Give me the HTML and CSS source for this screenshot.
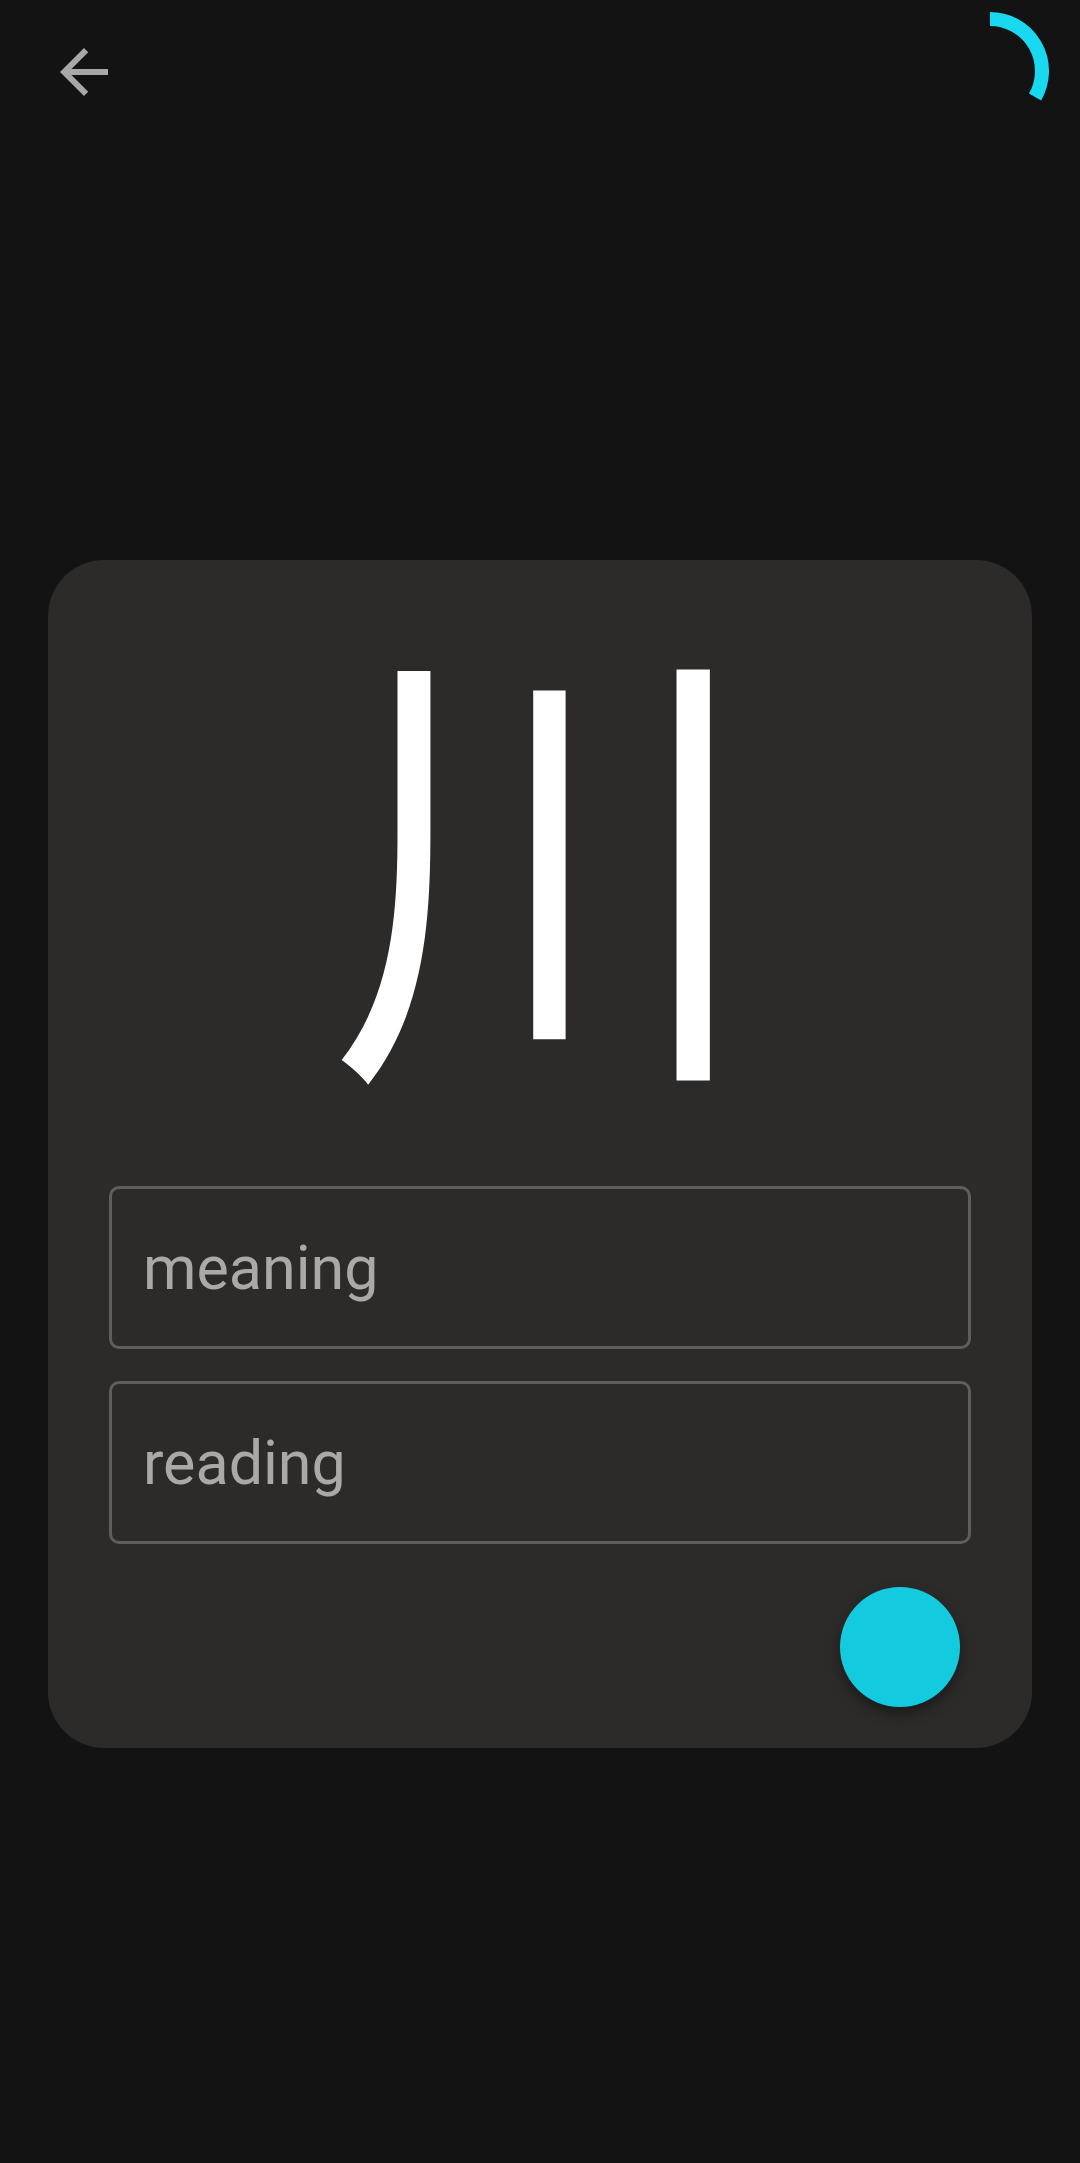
FILE: index.html
```html
<!DOCTYPE html>
<html lang="ja">
<head>
<meta charset="utf-8">
<title>Kanji card</title>
<link rel="stylesheet" href="styles.css">
</head>
<body>
<div class="screen">
  <header class="topbar">
    <button class="back" aria-label="Back">
      <svg viewBox="0 0 24 24" width="72" height="72"><path d="M20 11H7.83l5.59-5.59L12 4l-8 8 8 8 1.41-1.41L7.83 13H20v-2z" fill="#a8a8a8"/></svg>
    </button>
  </header>
  <svg class="spinner" viewBox="0 0 120 120" width="120" height="120">
    <path d="M60 8 A52 52 0 0 1 105.03 86" fill="none" stroke="#19d9f1" stroke-width="14"/>
  </svg>
  <main class="card">
    <div class="kanji"><span class="glyph">川</span></div>
    <div class="fields">
      <div class="field"><span class="placeholder">meaning</span></div>
      <div class="field"><span class="placeholder">reading</span></div>
    </div>
    <div class="actions">
      <button class="fab" aria-label="Submit"></button>
    </div>
  </main>
</div>
</body>
</html>
```
FILE: styles.css
```css
html, body {
  margin: 0;
  padding: 0;
  background: #131313;
}
.screen {
  position: relative;
  width: 1080px;
  height: 2163px;
  overflow: hidden;
  font-family: Roboto, "Noto Sans", sans-serif;
}
.topbar {
  height: 144px;
  display: flex;
  align-items: center;
  padding-left: 48px;
}
.back {
  width: 72px;
  height: 72px;
  padding: 0;
  border: none;
  background: none;
  display: block;
}
.back svg { display: block; }
.spinner {
  position: absolute;
  left: 930px;
  top: 11px;
}
.card {
  margin: 416px 48px 0;
  height: 1188px;
  box-sizing: border-box;
  background: #2c2b2a;
  border-radius: 56px;
  padding: 0 61px 41px;
  display: flex;
  flex-direction: column;
}
.kanji {
  height: 626px;
  box-sizing: border-box;
  padding-top: 40px;
  padding-left: 6px;
  font-family: "Noto Sans CJK JP", sans-serif;
  font-size: 474px;
  line-height: 1;
  color: #ffffff;
  text-align: center;
}
.glyph {
  display: inline-block;
  transform: scaleX(0.9);
}
.fields {
  display: flex;
  flex-direction: column;
  gap: 32px;
}
.field {
  height: 163px;
  box-sizing: border-box;
  border: 3px solid #5f5e5d;
  border-radius: 10px;
  display: flex;
  align-items: center;
  padding-left: 31px;
}
.placeholder {
  font-size: 61px;
  color: #aaa9a8;
}
.actions {
  margin-top: 43px;
  display: flex;
  justify-content: flex-end;
  padding-right: 11px;
}
.fab {
  width: 120px;
  height: 120px;
  border: none;
  padding: 0;
  border-radius: 50%;
  background: #14cadf;
  box-shadow: 0 6px 14px rgba(0, 0, 0, 0.4);
}
```
